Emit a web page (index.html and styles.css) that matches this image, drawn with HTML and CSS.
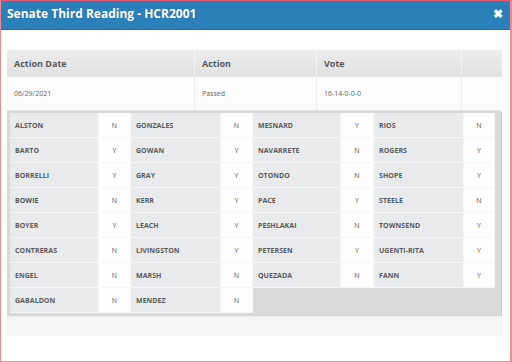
FILE: index.html
```html
<!DOCTYPE html>
<html>
<head>
<meta charset="utf-8">
<link rel="stylesheet" href="styles.css">
</head>
<body>
<div class="modal">
  <div class="modal-header">
    <span class="title">Senate Third Reading - HCR2001</span>
    <span class="close">✖</span>
  </div>
  <div class="modal-body">
    <div class="actions">
      <div class="row head">
        <div class="c c1">Action Date</div>
        <div class="c c2">Action</div>
        <div class="c c3">Vote</div>
        <div class="c c4"></div>
      </div>
      <div class="row data">
        <div class="c c1">06/29/2021</div>
        <div class="c c2">Passed</div>
        <div class="c c3">16-14-0-0-0</div>
        <div class="c c4"></div>
      </div>
    </div>
    <div class="votes">
      <div class="n">ALSTON</div><div class="v">N</div>
      <div class="n">GONZALES</div><div class="v">N</div>
      <div class="n">MESNARD</div><div class="v">Y</div>
      <div class="n">RIOS</div><div class="v">N</div>

      <div class="n">BARTO</div><div class="v">Y</div>
      <div class="n">GOWAN</div><div class="v">Y</div>
      <div class="n">NAVARRETE</div><div class="v">N</div>
      <div class="n">ROGERS</div><div class="v">Y</div>

      <div class="n">BORRELLI</div><div class="v">Y</div>
      <div class="n">GRAY</div><div class="v">Y</div>
      <div class="n">OTONDO</div><div class="v">N</div>
      <div class="n">SHOPE</div><div class="v">Y</div>

      <div class="n">BOWIE</div><div class="v">N</div>
      <div class="n">KERR</div><div class="v">Y</div>
      <div class="n">PACE</div><div class="v">Y</div>
      <div class="n">STEELE</div><div class="v">N</div>

      <div class="n">BOYER</div><div class="v">Y</div>
      <div class="n">LEACH</div><div class="v">Y</div>
      <div class="n">PESHLAKAI</div><div class="v">N</div>
      <div class="n">TOWNSEND</div><div class="v">Y</div>

      <div class="n">CONTRERAS</div><div class="v">N</div>
      <div class="n">LIVINGSTON</div><div class="v">Y</div>
      <div class="n">PETERSEN</div><div class="v">Y</div>
      <div class="n">UGENTI-RITA</div><div class="v">Y</div>

      <div class="n">ENGEL</div><div class="v">N</div>
      <div class="n">MARSH</div><div class="v">N</div>
      <div class="n">QUEZADA</div><div class="v">N</div>
      <div class="n">FANN</div><div class="v">Y</div>

      <div class="n">GABALDON</div><div class="v">N</div>
      <div class="n">MENDEZ</div><div class="v">N</div>
    </div>
    <div class="footer-row"></div>
  </div>
</div>
</body>
</html>
```

FILE: styles.css
```css
html, body {
  margin: 0;
  padding: 0;
  background: #fff;
}
body {
  font-family: "Open Sans", "Liberation Sans", sans-serif;
  color: #555;
}
.modal {
  box-sizing: border-box;
  width: 512px;
  height: 362px;
  border: 1px solid #ef8b95;
  border-right-width: 2px;
  border-top-color: #e35a72;
}
.modal-header {
  height: 28px;
  background: #2b80b9;
  border-bottom: 1px solid #1f6ba3;
  display: flex;
  align-items: center;
  justify-content: space-between;
  padding: 0 7px 0 6px;
}
.title {
  color: #fff;
  font-weight: 700;
  font-size: 12px;
  text-shadow: 0 0 1px rgba(0,0,0,0.25);
  position: relative;
  top: -2px;
}
.close {
  color: #fff;
  font-size: 12px;
  font-weight: 700;
  position: relative;
  top: -2px;
}
.modal-body {
  padding: 20px 8px 0 6px;
}
.actions {
  border-bottom: 1px solid #e3e3e3;
}
.row {
  display: flex;
}
.row.head {
  height: 27px;
  background: linear-gradient(#ececec, #e1e1e1);
  font-size: 9px;
  font-weight: 700;
  color: #595959;
}
.row.data {
  height: 33px;
  background: #fbfbfb;
  font-size: 7px;
  color: #666;
}
.c {
  display: flex;
  align-items: center;
  padding-left: 7px;
  box-sizing: border-box;
  border-right: 1px solid #f4f4f4;
}
.row.data .c { border-right-color: #ececec; }
.c1 { width: 188px; }
.c2 { width: 122px; }
.c3 { width: 145px; }
.c4 { flex: 1; border-right: none; }
.votes {
  background: #d9d9d9;
  padding: 2px 3px 3px 3px;
  margin-right: 1px;
  display: grid;
  grid-template-columns: 89px 32px 90px 32px 88px 33px 90px 31px;
  grid-auto-rows: 25px;
  box-shadow: 1px 1px 0 #c9c9c9;
}
.n, .v {
  box-sizing: border-box;
  display: flex;
  align-items: center;
  border-right: 1px solid #f6f6f6;
  border-bottom: 1px solid #f6f6f6;
  font-size: 7px;
}
.n {
  background: #e9eaeb;
  font-weight: 700;
  color: #5a5a5a;
  padding-left: 5px;
  letter-spacing: 0.05px;
}
.v {
  background: #fdfdfd;
  justify-content: center;
  color: #555;
}
.footer-row {
  height: 19px;
  background: #f5f5f5;
  border-top: 1px solid #ececec;
}
```
